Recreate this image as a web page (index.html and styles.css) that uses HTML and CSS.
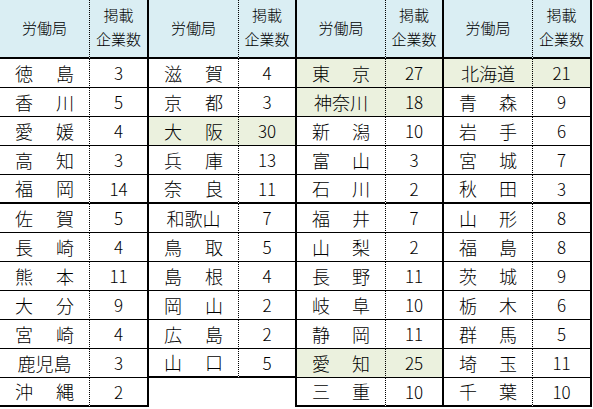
FILE: index.html
```html
<!DOCTYPE html>
<html lang="ja">
<head>
<meta charset="utf-8">
<title>労働局別 掲載企業数</title>
<link rel="stylesheet" href="styles.css">
</head>
<body>
<div class="sheet">
  <div class="cell hd n">労働局</div><div class="cell hd c"><span>掲載</span><span>企業数</span></div>
  <div class="cell hd n">労働局</div><div class="cell hd c"><span>掲載</span><span>企業数</span></div>
  <div class="cell hd n">労働局</div><div class="cell hd c"><span>掲載</span><span>企業数</span></div>
  <div class="cell hd n">労働局</div><div class="cell hd c"><span>掲載</span><span>企業数</span></div>

  <div class="cell n two"><span>徳</span><span>島</span></div><div class="cell c num">3</div>
  <div class="cell n two"><span>滋</span><span>賀</span></div><div class="cell c num">4</div>
  <div class="cell n two hl"><span>東</span><span>京</span></div><div class="cell c num hl">27</div>
  <div class="cell n three hl">北海道</div><div class="cell c num hl">21</div>

  <div class="cell n two"><span>香</span><span>川</span></div><div class="cell c num">5</div>
  <div class="cell n two"><span>京</span><span>都</span></div><div class="cell c num">3</div>
  <div class="cell n three hl">神奈川</div><div class="cell c num hl">18</div>
  <div class="cell n two"><span>青</span><span>森</span></div><div class="cell c num">9</div>

  <div class="cell n two"><span>愛</span><span>媛</span></div><div class="cell c num">4</div>
  <div class="cell n two hl"><span>大</span><span>阪</span></div><div class="cell c num hl">30</div>
  <div class="cell n two"><span>新</span><span>潟</span></div><div class="cell c num">10</div>
  <div class="cell n two"><span>岩</span><span>手</span></div><div class="cell c num">6</div>

  <div class="cell n two"><span>高</span><span>知</span></div><div class="cell c num">3</div>
  <div class="cell n two"><span>兵</span><span>庫</span></div><div class="cell c num">13</div>
  <div class="cell n two"><span>富</span><span>山</span></div><div class="cell c num">3</div>
  <div class="cell n two"><span>宮</span><span>城</span></div><div class="cell c num">7</div>

  <div class="cell n two sep"><span>福</span><span>岡</span></div><div class="cell c num sep">14</div>
  <div class="cell n two sep"><span>奈</span><span>良</span></div><div class="cell c num sep">11</div>
  <div class="cell n two sep"><span>石</span><span>川</span></div><div class="cell c num sep">2</div>
  <div class="cell n two sep"><span>秋</span><span>田</span></div><div class="cell c num sep">3</div>

  <div class="cell n two"><span>佐</span><span>賀</span></div><div class="cell c num">5</div>
  <div class="cell n three">和歌山</div><div class="cell c num">7</div>
  <div class="cell n two"><span>福</span><span>井</span></div><div class="cell c num">7</div>
  <div class="cell n two"><span>山</span><span>形</span></div><div class="cell c num">8</div>

  <div class="cell n two"><span>長</span><span>崎</span></div><div class="cell c num">4</div>
  <div class="cell n two"><span>鳥</span><span>取</span></div><div class="cell c num">5</div>
  <div class="cell n two"><span>山</span><span>梨</span></div><div class="cell c num">2</div>
  <div class="cell n two"><span>福</span><span>島</span></div><div class="cell c num">8</div>

  <div class="cell n two"><span>熊</span><span>本</span></div><div class="cell c num">11</div>
  <div class="cell n two"><span>島</span><span>根</span></div><div class="cell c num">4</div>
  <div class="cell n two"><span>長</span><span>野</span></div><div class="cell c num">11</div>
  <div class="cell n two"><span>茨</span><span>城</span></div><div class="cell c num">9</div>

  <div class="cell n two"><span>大</span><span>分</span></div><div class="cell c num">9</div>
  <div class="cell n two"><span>岡</span><span>山</span></div><div class="cell c num">2</div>
  <div class="cell n two"><span>岐</span><span>阜</span></div><div class="cell c num">10</div>
  <div class="cell n two"><span>栃</span><span>木</span></div><div class="cell c num">6</div>

  <div class="cell n two"><span>宮</span><span>崎</span></div><div class="cell c num">4</div>
  <div class="cell n two"><span>広</span><span>島</span></div><div class="cell c num">2</div>
  <div class="cell n two"><span>静</span><span>岡</span></div><div class="cell c num">11</div>
  <div class="cell n two"><span>群</span><span>馬</span></div><div class="cell c num">5</div>

  <div class="cell n three">鹿児島</div><div class="cell c num">3</div>
  <div class="cell n two end"><span>山</span><span>口</span></div><div class="cell c num end">5</div>
  <div class="cell n two hl"><span>愛</span><span>知</span></div><div class="cell c num hl">25</div>
  <div class="cell n two"><span>埼</span><span>玉</span></div><div class="cell c num">11</div>

  <div class="cell n two end"><span>沖</span><span>縄</span></div><div class="cell c num end">2</div>
  <div class="cell n blank"></div><div class="cell c blank"></div>
  <div class="cell n two end"><span>三</span><span>重</span></div><div class="cell c num end">10</div>
  <div class="cell n two end"><span>千</span><span>葉</span></div><div class="cell c num end">10</div>
</div>
</body>
</html>
```

FILE: styles.css
```css
html, body {
  margin: 0;
  padding: 0;
  background: #ffffff;
}

body {
  width: 593px;
  height: 409px;
  overflow: hidden;
  font-family: "Liberation Sans", "Noto Sans CJK JP", sans-serif;
  color: #000000;
}

.sheet {
  display: grid;
  grid-template-columns: 90px 59px 90px 58px 89px 58px 89px 59px;
  grid-template-rows: 59px repeat(12, 29px);
}

.cell {
  box-sizing: border-box;
  display: flex;
  align-items: center;
  border-bottom: 1px solid #000000;
  background: #ffffff;
}

.n {
  border-right: 1px dotted #000000;
}

.c {
  border-right: 2px solid #000000;
  justify-content: center;
}

.hd {
  background: #daeef3;
  border-bottom: 2px solid #000000;
  font-family: "Noto Sans CJK JP", sans-serif;
  font-weight: 300;
  font-size: 15px;
  justify-content: center;
}

.hd.n {
  padding-bottom: 2px;
}

.hd.c {
  flex-direction: column;
  line-height: 24px;
  padding-bottom: 3px;
}

.two,
.three {
  font-family: "Noto Sans CJK JP", sans-serif;
  font-weight: 300;
  font-size: 18px;
}

.two {
  justify-content: space-between;
  padding: 0 15px 1px 15px;
}

.three {
  justify-content: center;
  padding-bottom: 1px;
}

.num {
  font-family: "Noto Sans CJK JP", sans-serif;
  font-size: 17px;
  font-weight: 300;
  padding-bottom: 1px;
}

.hl {
  background: #ebf1de;
}

.sep,
.end {
  border-bottom-width: 2px;
}

.blank {
  border-bottom: none;
}

.blank.n {
  border-right: none;
}
```
